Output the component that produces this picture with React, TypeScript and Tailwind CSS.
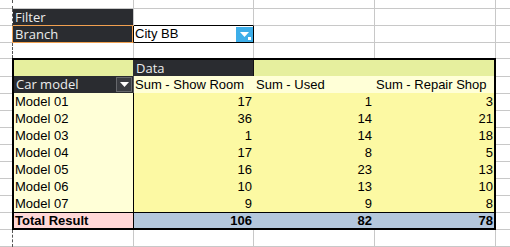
import React from "react";

const rows: [string, number, number, number][] = [
  ["Model 01", 17, 1, 3],
  ["Model 02", 36, 14, 21],
  ["Model 03", 1, 14, 18],
  ["Model 04", 17, 8, 5],
  ["Model 05", 16, 23, 13],
  ["Model 06", 10, 13, 10],
  ["Model 07", 9, 9, 8],
];

const totals = rows.reduce(
  (acc, r) => [acc[0] + r[1], acc[1] + r[2], acc[2] + r[3]],
  [0, 0, 0]
);

// sheet column cells with light gridlines
const cA = "w-[121px] shrink-0 border-b border-r border-b-[#c8c8c8] border-r-[#c8c8c8]";
const cB = "w-[120px] shrink-0 border-b border-r border-b-[#c8c8c8] border-r-[#c8c8c8]";
const cC = "w-[121px] shrink-0 border-b border-r border-b-[#c8c8c8] border-r-[#c8c8c8]";
const cD = "w-[121px] shrink-0 border-b border-r border-b-[#c8c8c8] border-r-[#c8c8c8]";
const cE = "flex-1 border-b border-b-[#c8c8c8]";

const sans = "font-['Liberation_Sans',Arial,sans-serif] text-[13px] text-black";
const ui = "font-['Open_Sans','Noto_Sans',sans-serif] text-[13px] text-[#ececec]";

function Margin() {
  // first (partial) column plus the dashed page break line
  return (
    <div className="flex w-[13px] shrink-0">
      <div className="w-[12px] border-b border-b-[#c8c8c8]" />
      <div className="w-px border-l border-dashed border-[#555]" />
    </div>
  );
}

function Arrow({ className }: { className?: string }) {
  return (
    <svg width="9" height="5" viewBox="0 0 9 5" className={className}>
      <polygon points="0,0 9,0 4.5,5" fill="#fff" />
    </svg>
  );
}

function EmptyRow({ h }: { h: string }) {
  return (
    <div className={`flex ${h}`}>
      <Margin />
      <div className={cA} />
      <div className={cB} />
      <div className={cC} />
      <div className={cD} />
      <div className={cE} />
    </div>
  );
}

function SideColumn({ className }: { className: string }) {
  return (
    <div className={`flex flex-col ${className}`}>
      <div className="h-[19px] border-t border-b border-[#c8c8c8]" />
      {Array.from({ length: 9 }).map((_, i) => (
        <div key={i} className="h-[17px] border-b border-b-[#c8c8c8]" />
      ))}
    </div>
  );
}

function PivotTable() {
  return (
    <div className="w-[484px] h-[172px] shrink-0 border-2 border-black flex flex-col">
      {/* data field header */}
      <div className="flex h-[16px] shrink-0">
        <div className="w-[119px] bg-[#e6ef9e]" />
        <div className={`w-[121px] bg-[#2a2c30] border-r border-r-[#111] pl-[3px] leading-[16px] ${ui}`}>Data</div>
        <div className="flex-1 bg-[#e6ef9e]" />
      </div>

      {/* column headers */}
      <div className="flex h-[17px] shrink-0">
        <div className={`w-[120px] bg-[#2a2c30] border-r border-r-[#5a5a5a] flex items-center justify-between pl-[2px] ${ui}`}>
          <span className="leading-[17px]">Car model</span>
          <div className="w-[16px] h-[15px] mr-px bg-[#3a3c41] border border-[#66686c] flex items-center justify-center">
            <Arrow />
          </div>
        </div>
        <div className={`w-[120px] bg-[#ffffd7] pl-[1px] leading-[17px] whitespace-nowrap ${sans}`}>Sum - Show Room</div>
        <div className={`w-[120px] bg-[#ffffd7] pl-[2px] leading-[17px] whitespace-nowrap ${sans}`}>Sum - Used</div>
        <div className={`flex-1 bg-[#ffffd7] pl-[2px] leading-[17px] whitespace-nowrap ${sans}`}>Sum - Repair Shop</div>
      </div>

      {rows.map(([name, a, b, c]) => (
        <div key={name} className={`flex h-[17px] shrink-0 leading-[17px] ${sans}`}>
          <div className="w-[120px] bg-[#ffffd7] border-r border-r-black pl-[1px]">{name}</div>
          <div className="w-[120px] bg-[#fcf9a3] text-right pr-[2px]">{a}</div>
          <div className="w-[120px] bg-[#fcf9a3] text-right pr-[2px]">{b}</div>
          <div className="flex-1 bg-[#fcf9a3] text-right pr-px">{c}</div>
        </div>
      ))}

      {/* grand total */}
      <div className={`flex h-[16px] shrink-0 border-t border-t-black leading-[15px] font-bold ${sans}`}>
        <div className="w-[120px] bg-[#ffd7d7] border-r border-r-black pl-[1px]">Total Result</div>
        <div className="w-[120px] bg-[#b4c7dc] text-right pr-[2px]">{totals[0]}</div>
        <div className="w-[120px] bg-[#b4c7dc] text-right pr-[2px]">{totals[1]}</div>
        <div className="flex-1 bg-[#b4c7dc] text-right pr-px">{totals[2]}</div>
      </div>
    </div>
  );
}

export default function App() {
  return (
    <div className="w-[510px] h-[247px] bg-white overflow-hidden">
      <EmptyRow h="h-[9px]" />

      {/* page filter */}
      <div className="flex h-[17px]">
        <Margin />
        <div className={`w-[121px] shrink-0 bg-[#2a2c30] border-b border-r border-b-[#f0a050] border-r-[#c8c8c8] pl-[2px] leading-[16px] ${ui}`}>
          Filter
        </div>
        <div className="w-[120px] shrink-0 border-b border-r border-b-black border-r-[#c8c8c8]" />
        <div className={cC} />
        <div className={cD} />
        <div className={cE} />
      </div>

      <div className="flex h-[17px]">
        <div className="flex w-[13px] shrink-0">
          <div className="w-[12px] border-b border-b-[#c8c8c8]" />
          <div className="w-px bg-[#f0a050]" />
        </div>
        <div className={`w-[121px] shrink-0 bg-[#2a2c30] border-b border-r border-b-[#f0a050] border-r-black shadow-[inset_-1px_0_0_#f0a050] pl-[2px] leading-[16px] ${ui}`}>
          Branch
        </div>
        <div className="w-[120px] shrink-0 border-b border-r border-black flex items-center justify-between pl-[1px]">
          <span className={`leading-[16px] ${sans}`}>City BB</span>
          <div className="relative w-[17px] h-[15px] bg-[#3daee9] flex items-center justify-center">
            <Arrow className="-ml-[1px]" />
            <span className="absolute right-[2px] bottom-[2px] w-[3px] h-[3px] bg-white" />
          </div>
        </div>
        <div className={cC} />
        <div className={cD} />
        <div className={cE} />
      </div>

      <div className="flex h-[15px]">
        <div className="flex w-[13px] shrink-0">
          <div className="w-[12px]" />
          <div className="w-px border-l border-dashed border-[#555]" />
        </div>
        <div className="w-[121px] shrink-0 border-r border-r-[#c8c8c8]" />
        <div className="w-[120px] shrink-0 border-r border-r-[#c8c8c8]" />
        <div className="w-[121px] shrink-0 border-r border-r-[#c8c8c8]" />
        <div className="w-[121px] shrink-0 border-r border-r-[#c8c8c8]" />
        <div className="flex-1" />
      </div>

      <div className="flex h-[172px]">
        <SideColumn className="w-[12px] shrink-0" />
        <PivotTable />
        <SideColumn className="flex-1" />
      </div>

      <EmptyRow h="h-[17px]" />
    </div>
  );
}
